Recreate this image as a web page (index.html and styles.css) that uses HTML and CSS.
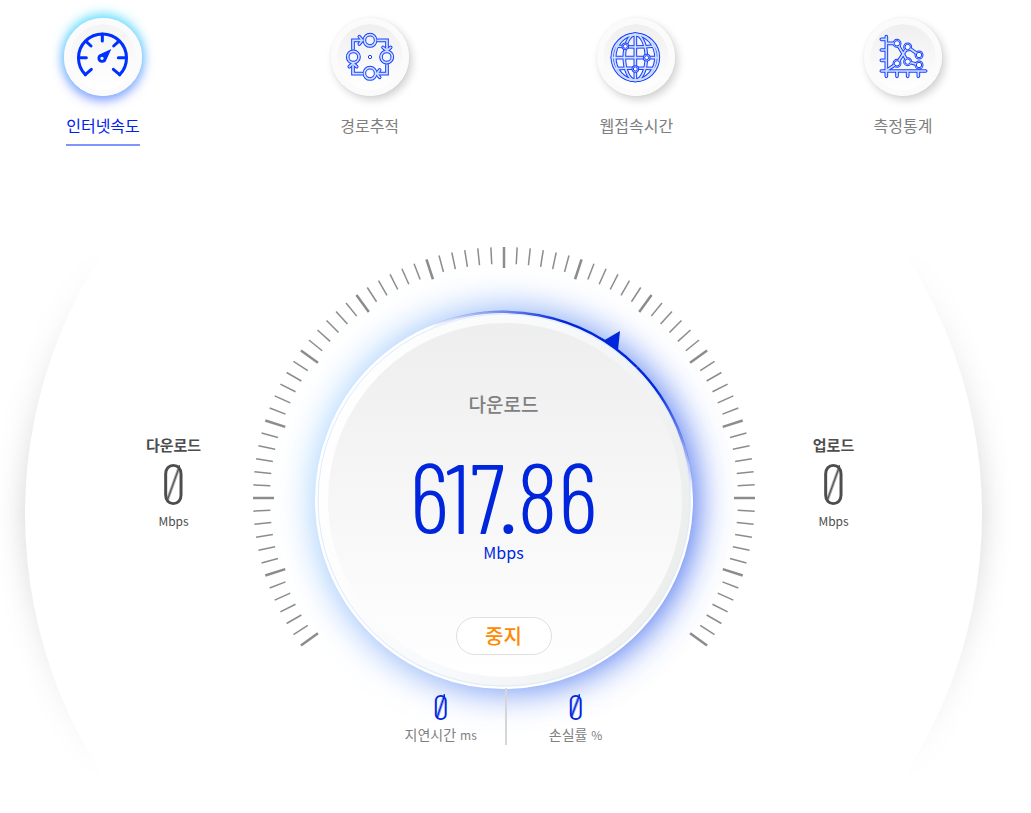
FILE: index.html
```
<!DOCTYPE html>
<html lang="ko">
<head>
    <meta charset="UTF-8">
    <meta name="viewport" content="width=device-width, initial-scale=1.0">
    <title>인터넷속도</title>
    <link rel="stylesheet" href="styles.css">
</head>
<body>
    <nav class="menu">
        <a class="menu-item active" href="#speed">
            <span class="menu-icon">
                <svg viewBox="109 93 156 156">
                    <g class="solid">
                        <path d="M134 224 A72 72 0 1 1 237 224"/>
                        <path d="M185 102V123M114 173H137M256 173H233M136 124L151 138M234 124L219 138M134 224L152 208M237 224L218 208"/>
                    </g>
                    <path class="needle" fill-rule="evenodd" d="M212 147L198 178A14 14 0 1 1 181 161ZM184 170A5 5 0 1 0 184 180A5 5 0 1 0 184 170Z"/>
                </svg>
            </span>
            <span class="menu-label">인터넷속도</span>
        </a>
        <a class="menu-item" href="#trace">
            <span class="menu-icon">
                <svg viewBox="103 92 156 156">
                    <defs>
                        <g id="trace">
                            <path d="M130 146V120H156M204 120H232V146M232 194V220H206M158 220H130V196"/>
                            <path d="M149 109L158 120L149 131M220 141L232 151L243 141M210 209L201 220L210 231M119 199L130 189L141 199"/>
                            <circle cx="181" cy="120" r="17"/>
                            <circle cx="231" cy="170" r="17"/>
                            <circle cx="181" cy="219" r="17"/>
                            <circle cx="131" cy="170" r="17"/>
                        </g>
                    </defs>
                    <use href="#trace" class="outer"/>
                    <use href="#trace" class="inner"/>
                    <circle class="dot" cx="181" cy="170" r="5"/>
                </svg>
            </span>
            <span class="menu-label">경로추적</span>
        </a>
        <a class="menu-item" href="#web">
            <span class="menu-icon">
                <svg viewBox="104 92 156 156">
                    <defs>
                        <g id="globe">
                            <circle cx="180" cy="171" r="69"/>
                            <ellipse cx="180" cy="171" rx="33" ry="69"/>
                            <ellipse cx="180" cy="171" rx="62" ry="69"/>
                            <path d="M180 102V240M111 172H249M121 137Q150 140 180 140T239 137M121 205Q150 203 180 203T239 205"/>
                        </g>
                        <g id="nodes">
                            <circle cx="150" cy="138" r="6"/>
                            <circle cx="214" cy="172" r="6"/>
                            <circle cx="180" cy="206" r="6"/>
                        </g>
                    </defs>
                    <use href="#globe" class="outer"/>
                    <use href="#globe" class="inner"/>
                    <use href="#nodes" class="outer filled"/>
                    <use href="#nodes" class="inner filled"/>
                    <use href="#nodes" class="core"/>
                </svg>
            </span>
            <span class="menu-label">웹접속시간</span>
        </a>
        <a class="menu-item" href="#stats">
            <span class="menu-icon">
                <svg viewBox="110 92 156 156">
                    <defs>
                        <g id="chart">
                            <path d="M138 109V228M123 212H256M123 117H138M123 149H138M123 180H138M170 212V228M202 212V228M234 212V228"/>
                            <path d="M142 129H170L202 184L236 194M142 208L170 189L202 140L236 164"/>
                        </g>
                        <g id="points">
                            <circle cx="170" cy="129" r="8"/>
                            <circle cx="202" cy="140" r="8"/>
                            <circle cx="236" cy="164" r="8"/>
                            <circle cx="202" cy="184" r="8"/>
                            <circle cx="236" cy="194" r="8"/>
                            <circle cx="170" cy="189" r="8"/>
                        </g>
                    </defs>
                    <use href="#chart" class="outer"/>
                    <use href="#points" class="outer filled"/>
                    <use href="#chart" class="inner"/>
                    <use href="#points" class="inner filled"/>
                    <use href="#points" class="core"/>
                </svg>
            </span>
            <span class="menu-label">측정통계</span>
        </a>
    </nav>

    <main class="stage">
        <div class="halo"></div>

        <section class="metric">
            <h2>다운로드</h2>
            <strong class="digits zero">0</strong>
            <span class="unit">Mbps</span>
        </section>

        <section class="gauge">
            <svg class="scale" viewBox="-252 -252 504 504">
                <defs>
                    <linearGradient id="glow" x1="0" y1="0.3" x2="1" y2="0.6">
                        <stop offset="0" stop-color="#aedaff"/>
                        <stop offset="0.5" stop-color="#7fa5f6"/>
                        <stop offset="1" stop-color="#2856ec"/>
                    </linearGradient>
                    <linearGradient id="rim" x1="0" y1="0.3" x2="1" y2="0.6">
                        <stop offset="0" stop-color="#fff"/>
                        <stop offset="0.5" stop-color="#f8f9fa"/>
                        <stop offset="1" stop-color="#eceeee"/>
                    </linearGradient>
                    <linearGradient id="face" x1="0" y1="0" x2="0" y2="1">
                        <stop offset="0" stop-color="#eee"/>
                        <stop offset="1" stop-color="#fff"/>
                    </linearGradient>
                    <linearGradient id="fadeIn" gradientUnits="userSpaceOnUse" x1="-75" y1="0" x2="60" y2="0">
                        <stop offset="0" stop-color="#0026dd" stop-opacity="0"/>
                        <stop offset="1" stop-color="#0026dd"/>
                    </linearGradient>
                    <linearGradient id="fadeOut" gradientUnits="userSpaceOnUse" x1="0" y1="-110" x2="0" y2="-5">
                        <stop offset="0" stop-color="#0026dd"/>
                        <stop offset="1" stop-color="#0026dd" stop-opacity="0"/>
                    </linearGradient>
                    <filter id="blur" x="-30%" y="-30%" width="160%" height="160%">
                        <feGaussianBlur stdDeviation="18"/>
                    </filter>
                </defs>
                <circle cy="2" r="191" fill="url(#glow)" filter="url(#blur)"/>
                <circle cy="2" r="188" fill="url(#rim)" stroke="#fff" stroke-width="2"/>
                <circle cy="2" r="186" fill="none" stroke="#dfebfc"/>
                <circle cx="1" cy="2" r="177" fill="url(#face)"/>
                <path class="arc" stroke="url(#fadeIn)" d="M-75 -170.4A188 188 0 0 1 132.9 -130.9"/>
                <path class="arc" stroke="url(#fadeOut)" d="M132.9 -130.9A188 188 0 0 1 188 2"/>
                <path class="pointer" d="M99 -157L116 -167L114 -148Z"/>
                <g id="ticks"></g>
            </svg>

            <div class="reading">
                <h1>다운로드</h1>
                <strong class="digits speed">617.86</strong>
                <span class="speed-unit">Mbps</span>
                <button type="button" class="stop">중지</button>
                <div class="quality">
                    <div class="quality-item">
                        <strong class="digits zero small">0</strong>
                        <span>지연시간 <small>ms</small></span>
                    </div>
                    <div class="quality-item">
                        <strong class="digits zero small">0</strong>
                        <span>손실률 <small>%</small></span>
                    </div>
                </div>
            </div>
        </section>

        <section class="metric">
            <h2>업로드</h2>
            <strong class="digits zero">0</strong>
            <span class="unit">Mbps</span>
        </section>
    </main>

    <script>
        // Draw the scale: one tick every 3 degrees, a long one every 18
        const ticks = document.getElementById('ticks');
        for (let deg = -126; deg <= 126; deg += 3) {
            const major = deg % 18 === 0;
            const line = document.createElementNS('http://www.w3.org/2000/svg', 'line');
            line.setAttribute('y1', -251);
            line.setAttribute('y2', major ? -230 : -234);
            line.setAttribute('class', major ? 'tick major' : 'tick');
            line.setAttribute('transform', `rotate(${deg})`);
            ticks.appendChild(line);
        }
    </script>
</body>
</html>
```
FILE: styles.css
```
* {
    box-sizing: border-box;
}

body {
    margin: 0;
    padding-right: 24px;
    background: #fff;
    color: #808080;
    font-family: 'Noto Sans CJK KR', 'Noto Sans', sans-serif;
    font-size: 16px;
    overflow-x: hidden;
}

h1, h2 {
    margin: 0;
}

/* Top menu */
.menu {
    display: flex;
    justify-content: space-between;
    padding: 18px 65px 0 64px;
}

.menu-item {
    display: flex;
    flex-direction: column;
    align-items: center;
    gap: 17px;
    width: 78px;
    color: #808080;
    text-decoration: none;
    white-space: nowrap;
}

.menu-icon {
    display: flex;
    align-items: center;
    justify-content: center;
    width: 78px;
    height: 78px;
    border: 6px solid #fbfbfb;
    border-radius: 50%;
    background: linear-gradient(#efefef, #fff) padding-box;
    box-shadow: 3px 4px 8px rgba(0, 0, 0, 0.18), 0 0 3px rgba(0, 0, 0, 0.06);
}

.menu-icon svg {
    flex: none;
    width: 52px;
    height: 52px;
}

.menu-label {
    padding-bottom: 7px;
    line-height: 24px;
    border-bottom: 2px solid transparent;
}

.menu-item.active {
    color: #0020f0;
}

.active .menu-icon {
    background: linear-gradient(#f4f4f4, #fff) padding-box;
    box-shadow: 0 -4px 12px rgba(60, 225, 255, 0.75), 0 4px 12px rgba(40, 70, 255, 0.6);
}

.active .menu-label {
    border-color: #8094ff;
}

/* Icon strokes */
.solid {
    fill: none;
    stroke: #0030ff;
    stroke-width: 9;
    stroke-linecap: round;
}

.needle {
    fill: #0030ff;
}

.outer {
    fill: none;
    stroke: #1a40ff;
    stroke-width: 11;
    stroke-linecap: round;
}

.inner {
    fill: none;
    stroke: #cfe0ff;
    stroke-width: 5;
    stroke-linecap: round;
}

.filled {
    fill: #cfe0ff;
}

.core,
.dot {
    fill: #fff;
    stroke: #1a40ff;
    stroke-width: 3;
}

/* Measuring area */
.stage {
    position: relative;
    display: flex;
    justify-content: center;
    margin-top: 100px;
    padding-bottom: 32px;
}

/* Large circle behind everything, faded at top and bottom */
.halo {
    position: absolute;
    inset: 0 -24px 0 0;
    z-index: -1;
    padding-right: 24px;
    overflow: hidden;
    display: flex;
    align-items: center;
    justify-content: center;
    -webkit-mask-image: linear-gradient(transparent, #000 50%, transparent);
    mask-image: linear-gradient(transparent, #000 50%, transparent);
}

.halo::before {
    content: '';
    flex: none;
    width: 95%;
    aspect-ratio: 1;
    border-radius: 50%;
    box-shadow: 0 0 30px rgba(0, 0, 0, 0.18);
}

.metric {
    display: flex;
    flex-direction: column;
    align-items: center;
    justify-content: center;
    width: 156px;
    padding-bottom: 30px;
    color: #4d4d4d;
}

.metric h2 {
    font-size: 15px;
    line-height: 24px;
}

.unit {
    font-size: 12px;
    line-height: 24px;
}

.digits {
    position: relative;
    font-family: 'Barlow Condensed', 'Roboto Condensed', 'Liberation Sans Narrow', Roboto, sans-serif;
    font-size: 56px;
    font-weight: 300;
    line-height: 52px;
}

/* Slash through the zero */
.zero::after {
    content: '';
    position: absolute;
    inset: 16% 24%;
    background: linear-gradient(to bottom right, transparent calc(50% - 2px), currentColor 50%, transparent calc(50% + 2px));
}

/* Gauge */
.gauge {
    display: grid;
    width: 504px;
}

.scale,
.reading {
    grid-area: 1 / 1;
}

.scale {
    width: 504px;
    height: 504px;
    overflow: visible;
}

.tick {
    stroke: #8c8c8c;
    stroke-width: 1.5;
}

.tick.major {
    stroke-width: 2.5;
}

.arc {
    fill: none;
    stroke-width: 2.5;
}

.pointer {
    fill: #0026dd;
}

.reading {
    display: flex;
    flex-direction: column;
    align-items: center;
    padding-top: 144px;
    z-index: 1;
}

.reading h1 {
    font-size: 19px;
    font-weight: 500;
    line-height: 28px;
}

.speed {
    margin-top: 33px;
    color: #0026dd;
    font-size: 98px;
    line-height: 88px;
}

.speed-unit {
    margin-top: 1px;
    color: #0026dd;
    font-size: 16px;
    line-height: 24px;
}

.stop {
    width: 96px;
    height: 38px;
    margin-top: 53px;
    padding: 0;
    border: 1px solid #e0e0e0;
    border-radius: 19px;
    background: #fff;
    color: #ff8a00;
    font-family: inherit;
    font-size: 20px;
    font-weight: 500;
    line-height: 36px;
    cursor: pointer;
}

/* Latency and loss */
.quality {
    display: flex;
    margin-top: 33px;
    font-size: 14px;
    line-height: 20px;
}

.quality-item {
    display: flex;
    flex-direction: column;
    align-items: center;
    padding-left: 42px;
}

.quality-item:first-child {
    padding: 0 28px 0 0;
    border-right: 2px solid #d6d6d6;
}

.quality small {
    font-size: 12px;
}

.digits.small {
    color: #0026dd;
    font-size: 36px;
    line-height: 36px;
}
```
